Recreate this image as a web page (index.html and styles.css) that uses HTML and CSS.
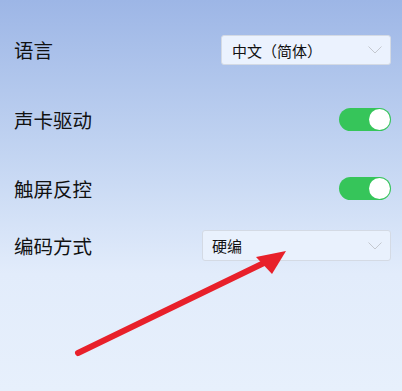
FILE: index.html
```html
<!DOCTYPE html>
<html lang="zh">
<head>
<meta charset="utf-8">
<link rel="stylesheet" href="styles.css">
</head>
<body>
<div class="panel">
  <div class="row row-lang">
    <span class="label">语言</span>
    <div class="select select-lang"><span>中文（简体）</span><svg class="chev" width="14" height="8" viewBox="0 0 14 8"><path d="M0.5 0.5 L7 7 L13.5 0.5" fill="none" stroke="#c4c8cf" stroke-width="1"/></svg></div>
  </div>
  <div class="row row-sound">
    <span class="label">声卡驱动</span>
    <div class="toggle"><span class="knob"></span></div>
  </div>
  <div class="row row-touch">
    <span class="label">触屏反控</span>
    <div class="toggle"><span class="knob"></span></div>
  </div>
  <div class="row row-enc">
    <span class="label">编码方式</span>
    <div class="select select-enc"><span>硬编</span><svg class="chev" width="14" height="8" viewBox="0 0 14 8"><path d="M0.5 0.5 L7 7 L13.5 0.5" fill="none" stroke="#c4c8cf" stroke-width="1"/></svg></div>
  </div>
</div>
<svg class="arrow" width="402" height="391" viewBox="0 0 402 391">
  <line x1="78" y1="353" x2="268" y2="261" stroke="#e8202a" stroke-width="6" stroke-linecap="round"/>
  <polygon points="286,251 256,257 272,274" fill="#e8202a"/>
</svg>
</body>
</html>
```
FILE: styles.css
```css
html, body {
  margin: 0;
  padding: 0;
}
body {
  width: 402px;
  height: 391px;
  overflow: hidden;
  position: relative;
  background: linear-gradient(180deg, #9db6e6 0%, #c3d5f2 40%, #e2ecfb 70%, #e7f0fc 100%);
  font-family: "Noto Sans CJK SC", "Noto Sans", sans-serif;
  color: #111;
}
.panel {
  display: flex;
  flex-direction: column;
  padding: 35px 11px 0 14px;
}
.row {
  display: flex;
  align-items: center;
  justify-content: space-between;
}
.row-lang { height: 30px; }
.row-sound { height: 23px; margin-top: 43px; }
.row-touch { height: 23px; margin-top: 46px; }
.row-enc { height: 31px; margin-top: 30px; }
.label {
  font-size: 19.5px;
  line-height: 1;
  color: #111;
}
.select {
  box-sizing: border-box;
  height: 100%;
  display: flex;
  align-items: center;
  justify-content: space-between;
  background: #ebf2fe;
  border: 1px solid #d4dae4;
  border-radius: 3px;
  font-size: 15px;
  color: #111;
}
.select-lang { width: 170px; padding: 0 8px 0 10px; }
.select-enc { width: 189px; padding: 0 8px 0 9px; background: #e9f1fd; }
.chev { display: block; }
.toggle {
  box-sizing: border-box;
  width: 52px;
  height: 23px;
  border-radius: 12px;
  background: #36c55a;
  display: flex;
  align-items: center;
  justify-content: flex-end;
  padding-right: 1px;
}
.knob {
  width: 21px;
  height: 21px;
  border-radius: 50%;
  background: #fff;
}
.arrow {
  position: absolute;
  left: 0;
  top: 0;
  pointer-events: none;
}
```
